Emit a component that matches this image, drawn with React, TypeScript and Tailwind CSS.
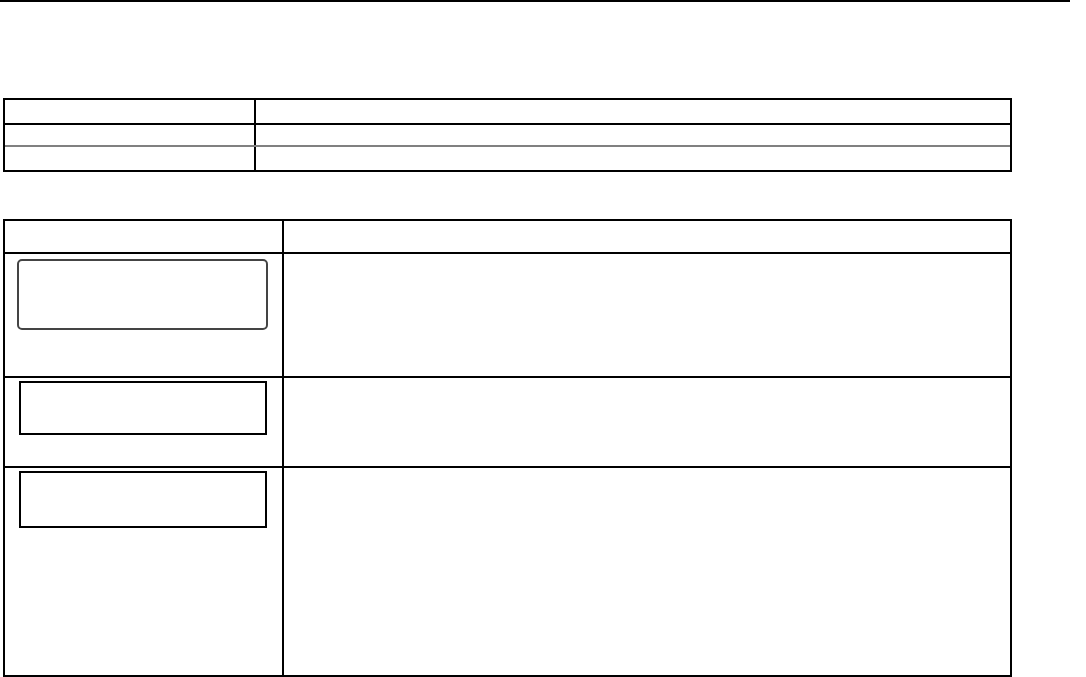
import React from "react";

export default function App() {
  return (
    <div className="w-[1086px] h-[677px] bg-white overflow-hidden relative" style={{ fontFamily: '"Liberation Sans", Arial, sans-serif' }}>
      <div className="w-[1070px] h-[2px] bg-black" />
      {/* Table 1 */}
      <div className="ml-[3px] mt-[96px] w-[1009px] border-2 border-black">
        <div className="grid grid-cols-[251px_1fr] h-[25px] border-b-2 border-black">
          <div className="border-r-2 border-black" />
          <div />
        </div>
        <div className="grid grid-cols-[251px_1fr] h-[22px] border-b-2 border-[#808080]">
          <div className="border-r-2 border-black" />
          <div />
        </div>
        <div className="grid grid-cols-[251px_1fr] h-[23px]">
          <div className="border-r-2 border-black" />
          <div />
        </div>
      </div>
      {/* Table 2 */}
      <div className="ml-[3px] mt-[47px] w-[1009px] h-[458px] border-2 border-black flex flex-col">
        <div className="grid grid-cols-[279px_1fr] h-[33px] shrink-0 border-b-2 border-black">
          <div className="border-r-2 border-black" />
          <div />
        </div>
        <div className="grid grid-cols-[279px_1fr] h-[124px] shrink-0 border-b-2 border-black">
          <div className="border-r-2 border-black pt-[5px] pl-[12px]">
            <div className="w-[251px] h-[71px] border-2 border-[#444] rounded-[5px]" />
          </div>
          <div />
        </div>
        <div className="grid grid-cols-[279px_1fr] h-[90px] shrink-0 border-b-2 border-black">
          <div className="border-r-2 border-black pt-[3px] pl-[14px]">
            <div className="w-[248px] h-[54px] border-2 border-black" />
          </div>
          <div />
        </div>
        <div className="grid grid-cols-[279px_1fr] flex-1">
          <div className="border-r-2 border-black pt-[3px] pl-[14px]">
            <div className="w-[248px] h-[57px] border-2 border-black" />
          </div>
          <div />
        </div>
      </div>
    </div>
  );
}
